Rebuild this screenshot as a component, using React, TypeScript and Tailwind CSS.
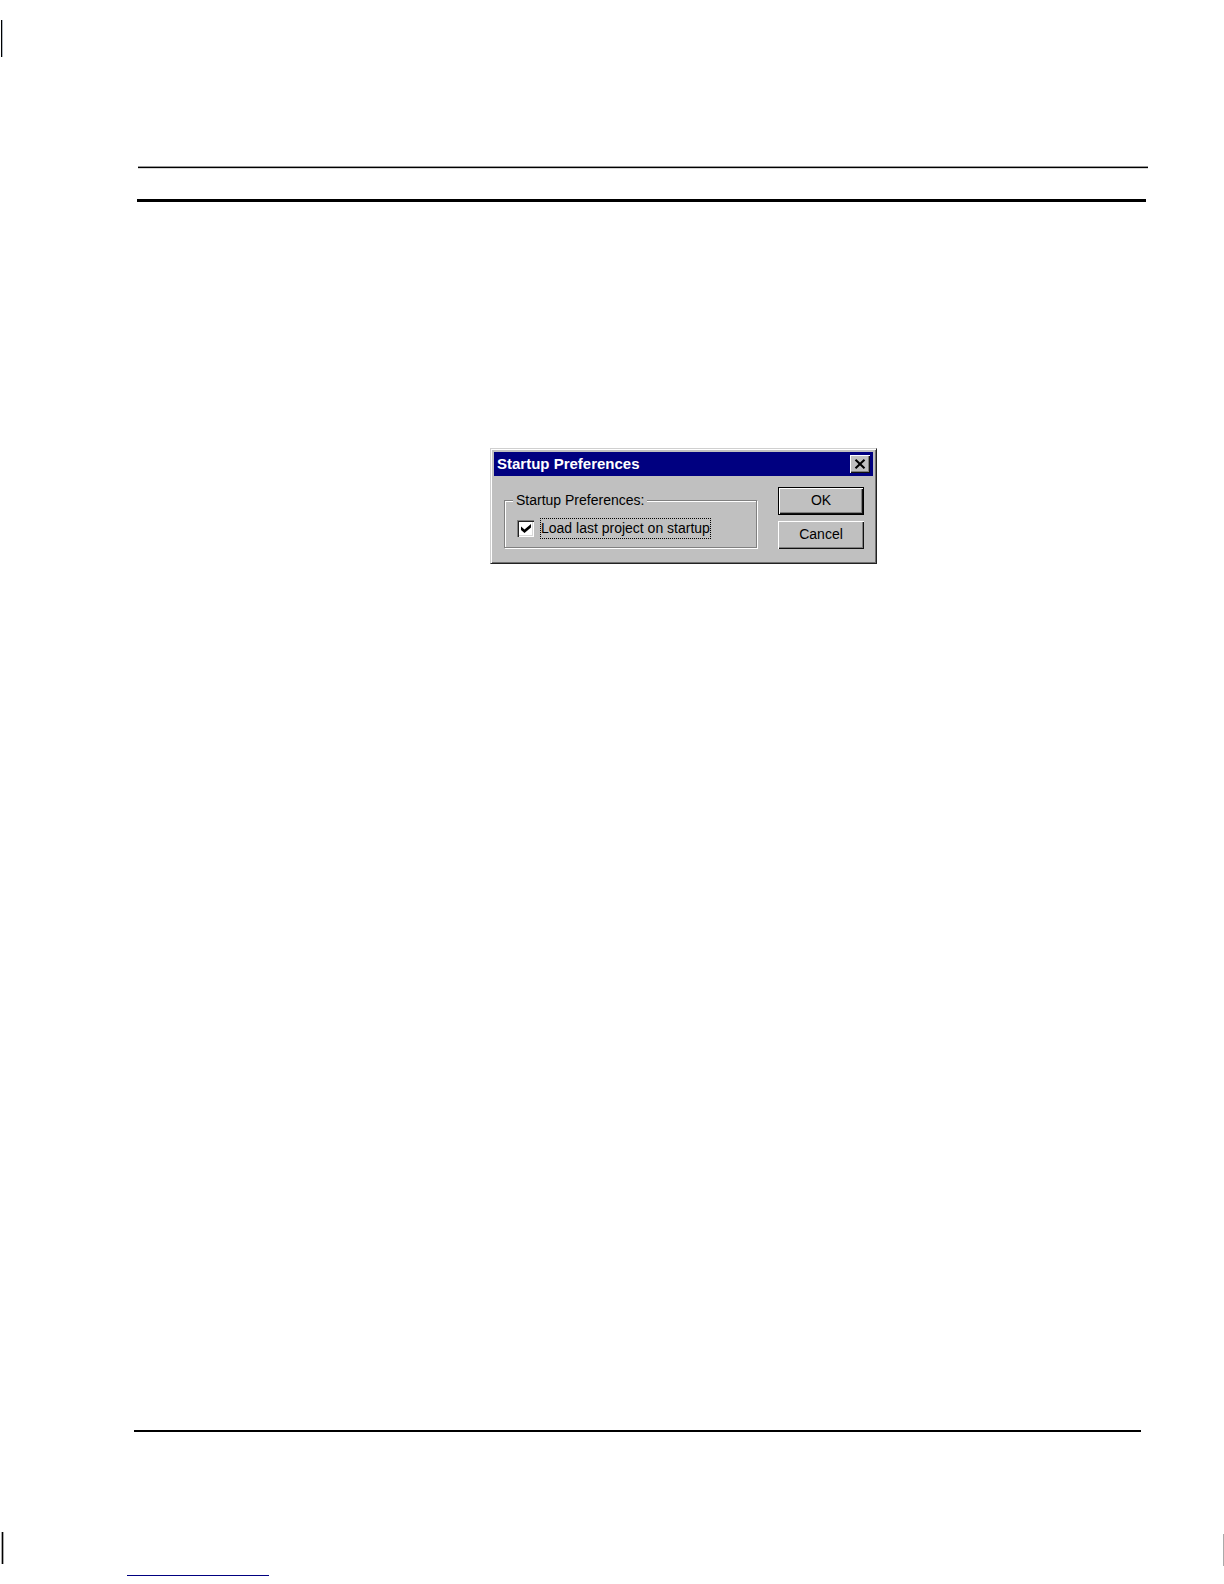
import { useState } from 'react';
import type { ReactNode } from 'react';

interface DialogButtonProps {
    children: ReactNode;
    isDefault?: boolean;
}

function DialogButton({ children, isDefault = false }: DialogButtonProps) {
    return (
        <button
            type="button"
            className={
                isDefault
                    ? 'flex h-7 w-[86px] items-center justify-center border border-black bg-[#c0c0c0] pb-0.5 text-[14px] leading-5 shadow-[inset_1px_1px_0_#fff,inset_-1px_-1px_0_#111,inset_-2px_-2px_0_#808080]'
                    : 'flex h-7 w-[86px] items-center justify-center bg-[#c0c0c0] pb-0.5 text-[14px] leading-5 shadow-[inset_1px_1px_0_#fff,inset_-1px_-1px_0_#111,inset_-2px_-2px_0_#808080]'
            }
        >
            {children}
        </button>
    );
}

function TitleBar() {
    return (
        <header className="flex h-6 items-center justify-between bg-[#000080] pl-[3px] pr-[3px]">
            <h1 className="text-[15px] font-bold leading-5 text-white">Startup Preferences</h1>
            <button
                type="button"
                aria-label="Close"
                className="flex h-[18px] w-5 items-center justify-center bg-[#c0c0c0] shadow-[inset_1px_1px_0_#fff,inset_-1px_-1px_0_#111,inset_-2px_-2px_0_#808080]"
            >
                <svg viewBox="0 0 12 10" className="h-2.5 w-3" aria-hidden="true">
                    <path d="M1.5 0.7 L10.5 9.3 M10.5 0.7 L1.5 9.3" stroke="#000" strokeWidth="2" fill="none" />
                </svg>
            </button>
        </header>
    );
}

function StartupDialog() {
    const [loadLast, setLoadLast] = useState(true);

    return (
        <section
            role="dialog"
            aria-label="Startup Preferences"
            className="w-[387px] border border-b-[#222] border-l-[#d0d0d0] border-r-[#222] border-t-[#d0d0d0] bg-[#c0c0c0] p-[3px] shadow-[inset_1px_1px_0_#fff,inset_-1px_-1px_0_#707070]"
        >
            <TitleBar />
            <form className="flex justify-between pb-[11px] pl-2.5 pr-[9px] pt-[11px]">
                <fieldset className="mt-[3px] h-[58px] w-[253px] border border-[#808080] px-2 shadow-[1px_1px_0_#fff,inset_1px_1px_0_#fff]">
                    <legend className="bg-[#c0c0c0] px-[3px] text-[14px] leading-5">Startup Preferences:</legend>
                    <div className="flex items-center gap-1.5 pl-1 pt-2">
                        <span className="grid h-[17px] w-[17px] place-items-center">
                            <input
                                id="load-last"
                                type="checkbox"
                                checked={loadLast}
                                onChange={(e) => setLoadLast(e.target.checked)}
                                className="col-start-1 row-start-1 h-[17px] w-[17px] appearance-none bg-white shadow-[inset_1px_1px_0_#808080,inset_2px_2px_0_#222,inset_-1px_-1px_0_#fff,inset_-2px_-2px_0_#d8d8d8]"
                            />
                            {loadLast && (
                                <svg
                                    viewBox="0 0 10 9"
                                    className="pointer-events-none col-start-1 row-start-1 h-[9px] w-2.5"
                                    aria-hidden="true"
                                >
                                    <path d="M0 2.5 L3.5 5.5 L10 0 V3.5 L3.5 9 L0 6 Z" fill="#000" />
                                </svg>
                            )}
                        </span>
                        <label
                            htmlFor="load-last"
                            className="whitespace-nowrap border border-dotted border-black text-[14px] leading-[19px]"
                        >
                            Load last project on startup
                        </label>
                    </div>
                </fieldset>
                <div className="flex flex-col gap-1.5">
                    <DialogButton isDefault>OK</DialogButton>
                    <DialogButton>Cancel</DialogButton>
                </div>
            </form>
        </section>
    );
}

export default function App() {
    return (
        <div className="flex min-h-screen bg-white font-['Liberation_Sans',Arial,sans-serif] text-black">
            {/* left crop marks */}
            <div className="flex w-1 flex-col justify-between pb-5 pl-px pt-5">
                <div className="h-[37px] w-0.5 border-r border-[#b0b8c0] bg-black" />
                <div className="h-8 w-[3px] border-x border-[#aaa] bg-black" />
            </div>

            <div className="flex flex-1 flex-col pb-2 pl-[123px] pr-[74px] pt-[166px]">
                <div className="ml-[11px] h-[3px] border-b border-t border-b-[#d8d8d8] border-t-[#999] bg-black" />
                <div className="ml-2.5 mr-0.5 mt-[30px] h-[3px] bg-black" />
                <main className="flex-1 pl-[363px] pt-[246px]">
                    <StartupDialog />
                </main>
                <div className="ml-[7px] mr-[7px] h-0.5 bg-black" />
                <div className="mt-[143px] h-px w-[142px] bg-[#000080]" />
            </div>

            {/* right crop mark */}
            <div className="flex w-0.5 flex-col justify-end pb-[18px] pl-px">
                <div className="h-8 w-px bg-[#aaa]" />
            </div>
        </div>
    );
}
